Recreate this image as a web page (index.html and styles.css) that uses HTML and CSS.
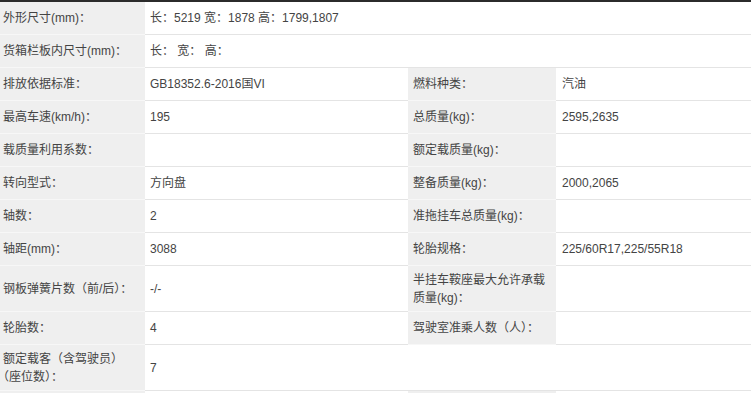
FILE: index.html
```html
<!DOCTYPE html>
<html lang="zh-CN">
<head>
<meta charset="utf-8">
<title>车辆参数</title>
<link rel="stylesheet" href="styles.css">
</head>
<body>
<div class="spec">
  <div class="cell label">外形尺寸(mm)：</div>
  <div class="cell value wide">长：5219 宽：1878 高：1799,1807</div>

  <div class="cell label">货箱栏板内尺寸(mm)：</div>
  <div class="cell value wide">长：&nbsp;宽：&nbsp;高：</div>

  <div class="cell label">排放依据标准：</div>
  <div class="cell value">GB18352.6-2016国VI</div>
  <div class="cell label label2">燃料种类：</div>
  <div class="cell value value2">汽油</div>

  <div class="cell label">最高车速(km/h)：</div>
  <div class="cell value">195</div>
  <div class="cell label label2">总质量(kg)：</div>
  <div class="cell value value2">2595,2635</div>

  <div class="cell label">载质量利用系数：</div>
  <div class="cell value"></div>
  <div class="cell label label2">额定载质量(kg)：</div>
  <div class="cell value value2"></div>

  <div class="cell label">转向型式：</div>
  <div class="cell value">方向盘</div>
  <div class="cell label label2">整备质量(kg)：</div>
  <div class="cell value value2">2000,2065</div>

  <div class="cell label">轴数：</div>
  <div class="cell value">2</div>
  <div class="cell label label2">准拖挂车总质量(kg)：</div>
  <div class="cell value value2"></div>

  <div class="cell label">轴距(mm)：</div>
  <div class="cell value">3088</div>
  <div class="cell label label2">轮胎规格：</div>
  <div class="cell value value2">225/60R17,225/55R18</div>

  <div class="cell label">钢板弹簧片数（前/后）：</div>
  <div class="cell value">-/-</div>
  <div class="cell label label2">半挂车鞍座最大允许承载质量(kg)：</div>
  <div class="cell value value2"></div>

  <div class="cell label">轮胎数：</div>
  <div class="cell value">4</div>
  <div class="cell label label2">驾驶室准乘人数（人）：</div>
  <div class="cell value value2"></div>

  <div class="cell label"><span>额定载客（含驾驶员）<span class="nowrap">（座位数）：</span></span></div>
  <div class="cell value wide">7</div>

  <div class="cell label"></div>
  <div class="cell value"></div>
  <div class="cell label label2"></div>
  <div class="cell value value2"></div>
</div>
</body>
</html>
```
FILE: styles.css
```css
html, body {
  margin: 0;
  padding: 0;
  background: #ffffff;
}

body {
  font-family: "Liberation Sans", "Noto Sans CJK SC", sans-serif;
  font-size: 12px;
  color: #444444;
  overflow: hidden;
}

.spec {
  width: 751px;
  border-top: 2px solid #2b2b2b;
  display: grid;
  grid-template-columns: 145px 263px 148px 195px;
  grid-template-rows: 33px 33px 33px 33px 33px 33px 33px 33px 46px 33px 46px 33px;
}

.cell {
  box-sizing: border-box;
  display: flex;
  align-items: center;
  line-height: 18px;
  border-bottom: 1px solid #e4e4e4;
  min-width: 0;
}

.label {
  background: #efefef;
  border-bottom-color: #f7f7f7;
  padding: 0 3px 0 3px;
}

.label2 {
  padding: 0 4px 0 5px;
}

.value {
  padding: 0 5px 0 5px;
}

.value2 {
  padding: 0 5px 0 6px;
}

.wide {
  grid-column: span 3;
}

.nowrap {
  white-space: nowrap;
}
```
